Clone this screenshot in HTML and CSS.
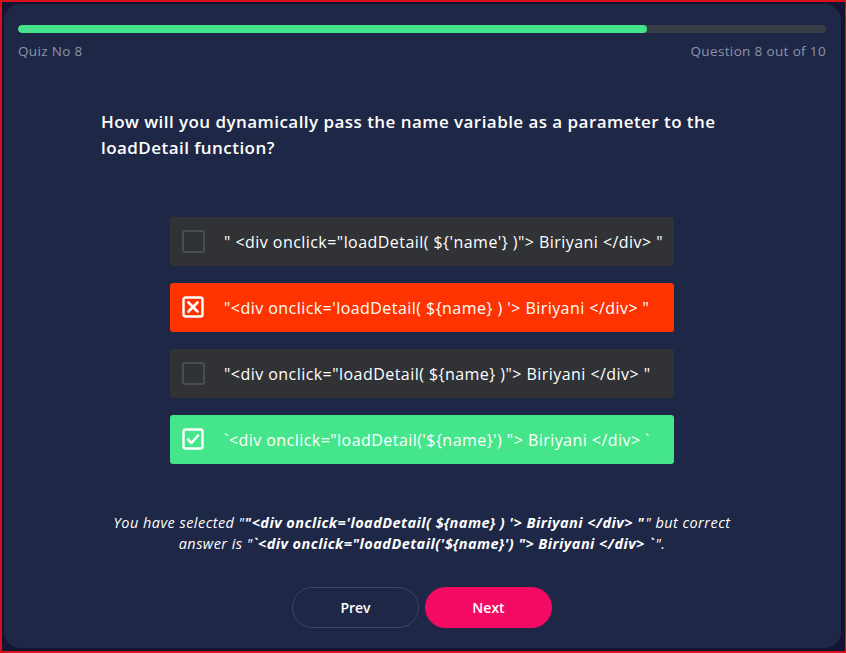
FILE: index.html
```html
<!DOCTYPE html>
<html>
<head>
<meta charset="utf-8">
<link rel="stylesheet" href="styles.css">
</head>
<body>
<div class="frame">
  <div class="card">
    <div class="progress"><div class="progress-fill" style="width: 77.9%"></div></div>
    <div class="meta">
      <span>Quiz No 8</span>
      <span>Question 8 out of 10</span>
    </div>
    <h1 class="question">How will you dynamically pass the name variable as a parameter to the loadDetail function?</h1>
    <div class="options">
      <div class="option">
        <span class="box"></span>
        <span class="label">" &lt;div onclick="loadDetail( ${'name'} )"&gt; Biriyani &lt;/div&gt; "</span>
      </div>
      <div class="option wrong">
        <span class="box">
          <svg width="22" height="22" viewBox="0 0 22 22"><rect x="1.5" y="1.5" width="19" height="19" rx="2" fill="none" stroke="#fff" stroke-width="2.4"/><path d="M6.5 6.5 L15.5 15.5 M15.5 6.5 L6.5 15.5" stroke="#fff" stroke-width="2.6" stroke-linecap="round"/></svg>
        </span>
        <span class="label">"&lt;div onclick='loadDetail( ${name} ) '&gt; Biriyani &lt;/div&gt; "</span>
      </div>
      <div class="option">
        <span class="box"></span>
        <span class="label">"&lt;div onclick="loadDetail( ${name} )"&gt; Biriyani &lt;/div&gt; "</span>
      </div>
      <div class="option right">
        <span class="box">
          <svg width="22" height="22" viewBox="0 0 22 22"><rect x="1.5" y="1.5" width="19" height="19" rx="2" fill="none" stroke="#fff" stroke-width="2.4"/><path d="M6 11.5 L9.5 15 L16 7.5" fill="none" stroke="#fff" stroke-width="2.6" stroke-linecap="round" stroke-linejoin="round"/></svg>
        </span>
        <span class="label">`&lt;div onclick="loadDetail('${name}') "&gt; Biriyani &lt;/div&gt; `</span>
      </div>
    </div>
    <p class="feedback">You have selected "<b>"&lt;div onclick='loadDetail( ${name} ) '&gt; Biriyani &lt;/div&gt; "</b>" but correct answer is "<b>`&lt;div onclick="loadDetail('${name}') "&gt; Biriyani &lt;/div&gt; `</b>".</p>
    <div class="actions">
      <button class="btn prev">Prev</button>
      <button class="btn next">Next</button>
    </div>
  </div>
</div>
</body>
</html>
```
FILE: styles.css
```css
* { box-sizing: border-box; }
html, body { margin: 0; padding: 0; }
body {
  font-family: "Open Sans", "DejaVu Sans", sans-serif;
  background: #141530;
}
.frame {
  width: 846px;
  height: 653px;
  border: 2px solid #d8101c;
  border-right-width: 1px;
  padding: 2px 4px 3px 2px;
  background: #151533;
  display: flex;
}
.card {
  flex: 1;
  background: #1e2745;
  border-radius: 16px;
  padding: 21px 15px 0 14px;
  display: flex;
  flex-direction: column;
}
.progress {
  height: 8px;
  border-radius: 4px;
  background: #373d45;
  overflow: hidden;
}
.progress-fill {
  height: 100%;
  background: #45e38b;
  border-radius: 4px;
}
.meta {
  display: flex;
  justify-content: space-between;
  margin-top: 9px;
  font-size: 13.5px;
  letter-spacing: 0.35px;
  line-height: 18px;
  color: #8c94aa;
}
.question {
  margin: 49px 0 0 83px;
  width: 640px;
  font-size: 17px;
  letter-spacing: 0.45px;
  line-height: 26px;
  font-weight: 600;
  color: #ffffff;
}
.options {
  margin: 56px auto 0;
  width: 504px;
  display: flex;
  flex-direction: column;
  gap: 17px;
}
.option {
  height: 49px;
  border-radius: 3px;
  background: #303236;
  display: flex;
  align-items: center;
  padding-left: 12px;
  color: #ffffff;
  font-size: 16px;
  letter-spacing: 0.45px;
}
.option.wrong { background: #fe3300; }
.option.right { background: #45e68b; }
.box {
  width: 23px;
  height: 23px;
  border: 2px solid #4a4d52;
  border-radius: 3px;
  flex: none;
  margin-right: 19px;
  display: flex;
}
.wrong .box, .right .box { border: none; }
.feedback {
  margin: 48px auto 0;
  width: 634px;
  text-align: center;
  font-style: italic;
  font-size: 14.5px;
  letter-spacing: 0.45px;
  line-height: 21px;
  color: #ffffff;
}
.feedback b { font-weight: 700; padding-right: 1px; }
.actions {
  margin-top: 33px;
  display: flex;
  justify-content: center;
  gap: 6px;
}
.btn {
  width: 127px;
  height: 41px;
  border-radius: 21px;
  font-family: inherit;
  font-size: 14px;
  font-weight: 600;
  color: #ffffff;
  border: 1px solid transparent;
}
.prev {
  background: transparent;
  border-color: #3c4662;
}
.next {
  background: #f20a63;
}
```
